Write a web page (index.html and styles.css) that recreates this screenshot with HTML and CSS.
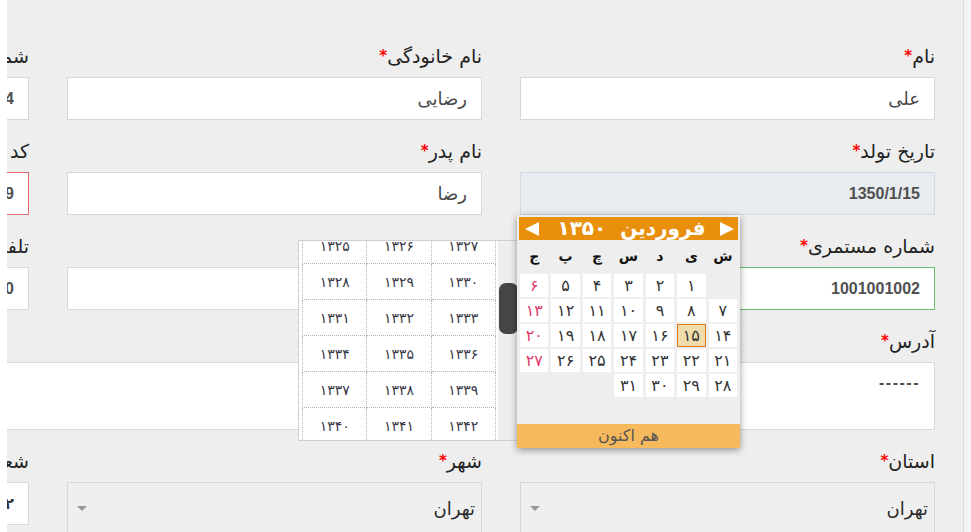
FILE: index.html
```html
<!DOCTYPE html>
<html lang="fa">
<head>
    <meta charset="UTF-8">
    <meta name="viewport" content="width=device-width, initial-scale=1.0">
    <title>فرم مشخصات</title>
    <link rel="stylesheet" href="styles.css">
</head>
<body>
    <div class="panel">
        <form class="form-grid">
            <!-- row 1 -->
            <div class="field">
                <label>نام<span class="req">*</span></label>
                <input type="text" class="ctl" value="علی">
            </div>
            <div class="field">
                <label>نام خانودگی<span class="req">*</span></label>
                <input type="text" class="ctl" value="رضایی">
            </div>
            <div class="field">
                <label>شماره شناسنامه</label>
                <input type="text" class="ctl num" value="1234">
            </div>

            <!-- row 2 -->
            <div class="field">
                <label>تاریخ تولد<span class="req">*</span></label>
                <input type="text" class="ctl num readonly" value="1350/1/15" readonly>
            </div>
            <div class="field">
                <label>نام پدر<span class="req">*</span></label>
                <input type="text" class="ctl" value="رضا">
            </div>
            <div class="field">
                <label>کد ملی</label>
                <input type="text" class="ctl num invalid" value="0012345679">
            </div>

            <!-- row 3 -->
            <div class="field">
                <label>شماره مستمری<span class="req">*</span></label>
                <input type="text" class="ctl num valid" value="1001001002">
            </div>
            <div class="field">
                <label>&nbsp;</label>
                <input type="text" class="ctl">
            </div>
            <div class="field">
                <label>تلفن</label>
                <input type="text" class="ctl num" value="02100000000">
            </div>

            <!-- row 4 -->
            <div class="field wide">
                <label>آدرس<span class="req">*</span></label>
                <textarea class="ctl area">------</textarea>
            </div>

            <!-- row 5 -->
            <div class="field">
                <label>استان<span class="req">*</span></label>
                <div class="select"><span>تهران</span><span class="caret"></span></div>
            </div>
            <div class="field">
                <label>شهر<span class="req">*</span></label>
                <div class="select"><span>تهران</span><span class="caret"></span></div>
            </div>
            <div class="field">
                <label>شعبه</label>
                <input type="text" class="ctl digit" value="۱۲">
            </div>
        </form>
    </div>

    <!-- year dropdown of the date picker -->
    <div class="year-picker">
        <div class="year-list">
            <table class="years">
                <tr><td>۱۳۲۵</td><td>۱۳۲۶</td><td>۱۳۲۷</td></tr>
                <tr><td>۱۳۲۸</td><td>۱۳۲۹</td><td>۱۳۳۰</td></tr>
                <tr><td>۱۳۳۱</td><td>۱۳۳۲</td><td>۱۳۳۳</td></tr>
                <tr><td>۱۳۳۴</td><td>۱۳۳۵</td><td>۱۳۳۶</td></tr>
                <tr><td>۱۳۳۷</td><td>۱۳۳۸</td><td>۱۳۳۹</td></tr>
                <tr><td>۱۳۴۰</td><td>۱۳۴۱</td><td>۱۳۴۲</td></tr>
            </table>
        </div>
        <div class="year-track"><div class="year-thumb"></div></div>
    </div>

    <!-- date picker -->
    <div class="calendar">
        <div class="cal-head">
            <svg class="arrow" width="15" height="14" viewBox="0 0 15 14"><polygon points="1,0 15,7 1,14" fill="#fff"/></svg>
            <div class="cal-title"><span>فروردین</span><span>۱۳۵۰</span></div>
            <svg class="arrow" width="15" height="14" viewBox="0 0 15 14"><polygon points="14,0 0,7 14,14" fill="#fff"/></svg>
        </div>
        <div class="cal-week">
            <span>ش</span><span>ی</span><span>د</span><span>س</span><span>چ</span><span>پ</span><span>ج</span>
        </div>
        <div class="cal-days">
            <span class="blank"></span><span>۱</span><span>۲</span><span>۳</span><span>۴</span><span>۵</span><span class="fri">۶</span>
            <span>۷</span><span>۸</span><span>۹</span><span>۱۰</span><span>۱۱</span><span>۱۲</span><span class="fri">۱۳</span>
            <span>۱۴</span><span class="sel">۱۵</span><span>۱۶</span><span>۱۷</span><span>۱۸</span><span>۱۹</span><span class="fri">۲۰</span>
            <span>۲۱</span><span>۲۲</span><span>۲۳</span><span>۲۴</span><span>۲۵</span><span>۲۶</span><span class="fri">۲۷</span>
            <span>۲۸</span><span>۲۹</span><span>۳۰</span><span>۳۱</span>
        </div>
        <div class="cal-foot">هم اکنون</div>
    </div>
</body>
</html>
```

FILE: styles.css
```css
body {
    margin: 0;
    background-color: #f4f4f4;
    border-left: 7px solid #fff;
    font-family: "DejaVu Sans", sans-serif;
    color: #333;
    height: 532px;
    overflow: hidden;
}

.panel {
    width: 956px;
    height: 532px;
    background-color: #eeeeee;
    border-right: 1px solid #dadada;
    overflow: hidden;
    direction: rtl;
}

.form-grid {
    display: grid;
    grid-template-columns: repeat(3, 415px);
    column-gap: 38px;
    row-gap: 20px;
    padding: 45px 28px 0 0;
    margin: 0;
}

.field label {
    display: block;
    height: 22px;
    line-height: 22px;
    margin-bottom: 10px;
    font-size: 19px;
    color: #222;
    white-space: nowrap;
}

.req {
    color: #f00;
    font-size: 15px;
    font-weight: bold;
    vertical-align: 2px;
}

.wide {
    grid-column: 1 / -1;
}

.ctl {
    display: block;
    width: 100%;
    height: 43px;
    box-sizing: border-box;
    border: 1px solid #d3d9e0;
    background-color: #fff;
    padding: 0 14px;
    font-family: "DejaVu Sans", sans-serif;
    font-size: 18px;
    color: #4a4a4a;
    direction: rtl;
    outline: none;
}

.num {
    font-family: "Liberation Sans", Arial, sans-serif;
    font-weight: bold;
    font-size: 16px;
    color: #505050;
}

.digit {
    font-weight: bold;
    color: #333;
    font-size: 16px;
}

.readonly {
    background-color: #e8ebef;
}

.invalid {
    border-color: #e26b6b;
}

.valid {
    border-color: #6abf6e;
}

.area {
    height: 68px;
    padding: 10px 14px;
    line-height: 20px;
    resize: none;
    font-family: "Liberation Sans", Arial, sans-serif;
    font-weight: bold;
    font-size: 16px;
    letter-spacing: 1.5px;
    color: #505050;
}

.select {
    display: flex;
    align-items: center;
    justify-content: space-between;
    height: 52px;
    box-sizing: border-box;
    border: 1px solid #d3d9e0;
    background-color: #efefef;
    padding: 0 6px 0 9px;
    font-size: 18px;
    color: #2b2b2b;
}

.caret {
    width: 0;
    height: 0;
    border-left: 5px solid transparent;
    border-right: 5px solid transparent;
    border-top: 5px solid #999;
}

/* year dropdown */
.year-picker {
    position: absolute;
    left: 298px;
    top: 240px;
    width: 219px;
    height: 199px;
    border: 1px solid #cfcfcf;
    background-color: #eee;
    display: flex;
    direction: ltr;
}

.year-list {
    width: 196px;
    height: 100%;
    background-color: #fff;
    overflow: hidden;
    padding-left: 3px;
}

.years {
    border-collapse: collapse;
    width: 194px;
    margin-top: -14px;
}

.years td {
    border: 1px dotted #b4b4b4;
    height: 35px;
    padding: 0;
    text-align: center;
    font-size: 14px;
    color: #3a3a4a;
}

.year-track {
    flex: 1;
}

.year-thumb {
    width: 19px;
    height: 51px;
    margin-top: 42px;
    margin-left: 1px;
    border-radius: 7px;
    background-color: #454545;
}

/* calendar */
.calendar {
    position: absolute;
    left: 517px;
    top: 215px;
    width: 219px;
    padding: 2px 2px 0;
    background-color: #eeeeee;
    box-shadow: 0 2px 7px rgba(0, 0, 0, 0.4);
    direction: rtl;
}

.cal-head {
    display: flex;
    align-items: center;
    justify-content: space-between;
    height: 23px;
    padding: 0 4px 0 6px;
    background-color: #e8900c;
    overflow: hidden;
}

.cal-title {
    display: flex;
    gap: 14px;
    color: #fff;
    font-weight: bold;
    font-size: 20px;
    line-height: 23px;
    margin-left: 4px;
}

.cal-week {
    display: grid;
    grid-template-columns: repeat(7, 1fr);
    column-gap: 3px;
    height: 32px;
    margin-bottom: 2px;
    padding: 0 1px;
    align-items: center;
    text-align: center;
    font-size: 14px;
    font-weight: bold;
    color: #111;
}

.cal-days {
    display: grid;
    grid-template-columns: repeat(7, 1fr);
    grid-template-rows: repeat(6, 23px);
    gap: 2px 3px;
    padding: 0 1px;
    margin-bottom: 2px;
}

.cal-days span {
    background-color: #fff;
    text-align: center;
    line-height: 23px;
    font-size: 16px;
    color: #333;
    box-sizing: border-box;
}

.cal-days .blank {
    background-color: transparent;
}

.cal-days .fri {
    color: #dd3b6c;
}

.cal-days .sel {
    background-color: #efdcaa;
    border: 1px solid #e07a1f;
    line-height: 21px;
}

.cal-foot {
    margin: 0 -2px;
    height: 24px;
    line-height: 24px;
    background-color: #f6b95b;
    text-align: center;
    font-size: 16px;
    color: #555;
}
```
